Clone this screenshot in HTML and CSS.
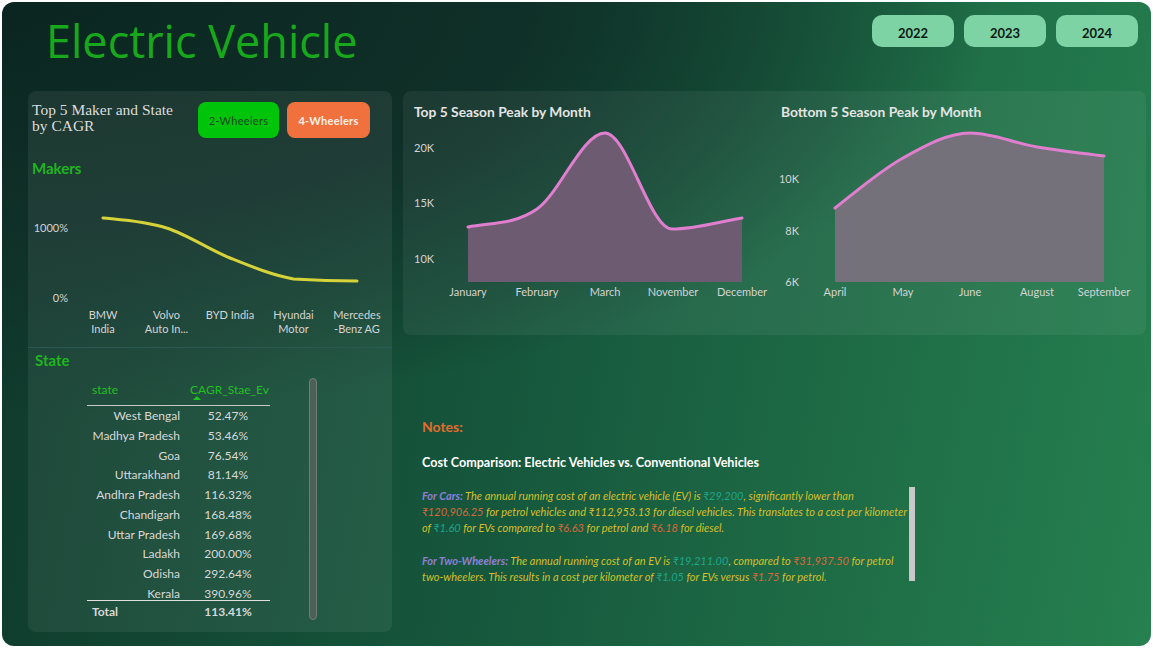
FILE: index.html
```html
<!DOCTYPE html>
<html>
<head>
<meta charset="utf-8">
<title>Electric Vehicle</title>
<link rel="stylesheet" href="styles.css">
</head>
<body>
<div class="page">
  <header class="top">
    <h1 class="title">Electric Vehicle</h1>
    <div class="years">
      <div class="year">2022</div>
      <div class="year">2023</div>
      <div class="year">2024</div>
    </div>
  </header>
  <main class="main">
    <section class="left">
      <div class="makers">
        <div class="lhead">
          <div class="ltitle">Top 5 Maker and State<br>by CAGR</div>
          <div class="toggles">
            <div class="tg tg2">2-Wheelers</div>
            <div class="tg tg4">4-Wheelers</div>
          </div>
        </div>
        <div class="sub">Makers</div>
        <svg class="mchart" viewBox="28 178 364 168" width="364" height="168">
          <g class="axis">
            <text x="68" y="232" text-anchor="end">1000%</text>
            <text x="68" y="302" text-anchor="end">0%</text>
            <text x="103" y="319" text-anchor="middle">BMW</text>
            <text x="103" y="333" text-anchor="middle">India</text>
            <text x="166.5" y="319" text-anchor="middle">Volvo</text>
            <text x="166.5" y="333" text-anchor="middle">Auto In...</text>
            <text x="230" y="319" text-anchor="middle">BYD India</text>
            <text x="293.5" y="319" text-anchor="middle">Hyundai</text>
            <text x="293.5" y="333" text-anchor="middle">Motor</text>
            <text x="357" y="319" text-anchor="middle">Mercedes</text>
            <text x="357" y="333" text-anchor="middle">-Benz AG</text>
          </g>
          <path d="M103,218 C124.2,220.1 145.3,221.3 166.5,228 C187.7,234.7 208.8,249.5 230,258 C251.2,266.5 272.3,275.2 293.5,279 C314.7,280.3 335.8,281 357,281" fill="none" stroke="#d6d23a" stroke-width="3" stroke-linecap="round"/>
        </svg>
      </div>
      <div class="states">
        <div class="sub sub-state">State</div>
        <div class="tablewrap">
          <div class="tbl">
            <div class="thead">
              <div class="th th-state">state</div>
              <div class="th th-val"><div>CAGR_Stae_Ev</div><div class="sort"></div></div>
            </div>
            <div class="tbody">
              <div class="row"><div class="st">West Bengal</div><div class="val">52.47%</div></div>
              <div class="row"><div class="st">Madhya Pradesh</div><div class="val">53.46%</div></div>
              <div class="row"><div class="st">Goa</div><div class="val">76.54%</div></div>
              <div class="row"><div class="st">Uttarakhand</div><div class="val">81.14%</div></div>
              <div class="row"><div class="st">Andhra Pradesh</div><div class="val">116.32%</div></div>
              <div class="row"><div class="st">Chandigarh</div><div class="val">168.48%</div></div>
              <div class="row"><div class="st">Uttar Pradesh</div><div class="val">169.68%</div></div>
              <div class="row"><div class="st">Ladakh</div><div class="val">200.00%</div></div>
              <div class="row"><div class="st">Odisha</div><div class="val">292.64%</div></div>
              <div class="row"><div class="st">Kerala</div><div class="val">390.96%</div></div>
            </div>
            <div class="ttotal"><div class="tt">Total</div><div class="val">113.41%</div></div>
          </div>
          <div class="vscroll"></div>
        </div>
      </div>
    </section>
    <section class="right">
      <div class="charts">
        <div class="chart">
          <div class="ctitle">Top 5 Season Peak by Month</div>
          <svg class="csvg" viewBox="403 122 372 213" width="372" height="213">
            <path d="M468,227 C491,222.4 514,224.9 537,209 C559.7,193.4 582.3,133 605,133 C627.3,133 649.7,229 672,229 C695.3,229 718.7,221.7 742,218 L742,282 L468,282 Z" fill="#6c5b71"/>
            <path d="M468,227 C491,222.4 514,224.9 537,209 C559.7,193.4 582.3,133 605,133 C627.3,133 649.7,229 672,229 C695.3,229 718.7,221.7 742,218" fill="none" stroke="#e07fcf" stroke-width="3" stroke-linecap="round"/>
            <g class="axis">
              <text x="414" y="152">20K</text>
              <text x="414" y="207">15K</text>
              <text x="414" y="263">10K</text>
              <text x="468" y="296" text-anchor="middle">January</text>
              <text x="537" y="296" text-anchor="middle">February</text>
              <text x="605" y="296" text-anchor="middle">March</text>
              <text x="673" y="296" text-anchor="middle">November</text>
              <text x="742" y="296" text-anchor="middle">December</text>
            </g>
          </svg>
        </div>
        <div class="chart chart2">
          <div class="ctitle">Bottom 5 Season Peak by Month</div>
          <svg class="csvg" viewBox="775 122 371 213" width="371" height="213">
            <path d="M835,208 C857.7,190.3 880.3,170.6 903,158 C925.3,145.6 947.7,133 970,133 C992.3,133 1014.7,143.2 1037,147 C1059.3,150.8 1081.7,153 1104,156 L1104,282 L835,282 Z" fill="#75717b"/>
            <path d="M835,208 C857.7,190.3 880.3,170.6 903,158 C925.3,145.6 947.7,133 970,133 C992.3,133 1014.7,143.2 1037,147 C1059.3,150.8 1081.7,153 1104,156" fill="none" stroke="#e07fcf" stroke-width="3" stroke-linecap="round"/>
            <g class="axis">
              <text x="799" y="183" text-anchor="end">10K</text>
              <text x="799" y="235" text-anchor="end">8K</text>
              <text x="799" y="286" text-anchor="end">6K</text>
              <text x="835" y="296" text-anchor="middle">April</text>
              <text x="903" y="296" text-anchor="middle">May</text>
              <text x="970" y="296" text-anchor="middle">June</text>
              <text x="1037" y="296" text-anchor="middle">August</text>
              <text x="1104" y="296" text-anchor="middle">September</text>
            </g>
          </svg>
        </div>
      </div>
      <div class="notes">
        <div class="nt">Notes:</div>
        <div class="nh">Cost Comparison: Electric Vehicles vs. Conventional Vehicles</div>
        <div class="nbody">
          <div class="ntext">
            <p><b class="lbl">For Cars:</b> The annual running cost of an electric vehicle (EV) is <span class="teal">₹29,200</span>, significantly lower than<br><span class="org">₹120,906.25</span> for petrol vehicles and ₹112,953.13 for diesel vehicles. This translates to a cost per kilometer<br>of <span class="teal">₹1.60</span> for EVs compared to <span class="org">₹6.63</span> for petrol and <span class="org">₹6.18</span> for diesel.</p>
            <p class="p2"><b class="lbl">For Two-Wheelers:</b> The annual running cost of an EV is <span class="teal">₹19,211.00</span>, compared to <span class="org">₹31,937.50</span> for petrol<br>two-wheelers. This results in a cost per kilometer of <span class="teal">₹1.05</span> for EVs versus <span class="org">₹1.75</span> for petrol.</p>
          </div>
          <div class="nscroll"></div>
        </div>
      </div>
    </section>
  </main>
</div>
</body>
</html>
```
FILE: styles.css
```css
html, body {
  margin: 0;
  padding: 0;
}
body {
  background: #ffffff;
  font-family: Lato, "Open Sans", sans-serif;
  color: #dcdcdc;
}
.page {
  margin: 2px;
  width: 1149px;
  height: 644px;
  border-radius: 12px;
  overflow: hidden;
  display: flex;
  flex-direction: column;
  background:
    radial-gradient(120% 90% at 0% 0%, #0b2520 0%, #0f3028 38%, rgba(15, 48, 40, 0) 72%),
    linear-gradient(100deg, #0f382b 0%, #175a3e 50%, #26804f 100%);
}
.top {
  height: 89px;
  flex: none;
  display: flex;
  justify-content: space-between;
  align-items: flex-start;
  padding: 0 13px 0 44px;
  box-sizing: border-box;
}
.title {
  margin: 14px 0 0 0;
  font-family: "Open Sans", sans-serif;
  font-weight: 400;
  font-size: 45px;
  line-height: 50px;
  color: #18a81c;
}
.years {
  display: flex;
  gap: 10px;
  margin-top: 13px;
}
.year {
  width: 82px;
  height: 32px;
  box-sizing: border-box;
  padding-top: 4px;
  border-radius: 10px;
  background: #7dd3a4;
  color: #101a14;
  font-weight: 700;
  font-size: 13px;
  display: flex;
  align-items: center;
  justify-content: center;
}
.main {
  height: 541px;
  display: flex;
  gap: 11px;
  padding: 0 5px 0 26px;
}
.left {
  width: 364px;
  flex: none;
  display: flex;
  flex-direction: column;
  border-radius: 8px;
  background: rgba(255, 255, 255, 0.065);
  overflow: hidden;
}
.makers {
  height: 256px;
  flex: none;
}
.lhead {
  display: flex;
  padding: 11px 0 0 4px;
}
.ltitle {
  width: 166px;
  font-family: "Liberation Serif", serif;
  font-size: 15.5px;
  line-height: 16px;
  color: #dcdcdc;
}
.toggles {
  display: flex;
  gap: 8px;
}
.tg {
  height: 36px;
  border-radius: 8px;
  display: flex;
  align-items: center;
  justify-content: center;
  font-size: 11px;
  letter-spacing: 0.3px;
}
.tg2 {
  width: 81px;
  background: #00c40a;
  color: #1d4a22;
}
.tg4 {
  width: 83px;
  background: #f0703e;
  color: #fff0e8;
  font-weight: 700;
}
.sub {
  margin-top: 20px;
  padding-left: 4px;
  font-size: 15px;
  font-weight: 700;
  line-height: 20px;
  color: #1fb51f;
}
.mchart {
  display: block;
}
.axis text {
  font-family: Lato, "Open Sans", sans-serif;
  font-size: 11px;
  fill: #d4d4d4;
}
.states {
  flex: 1;
  border-top: 1px solid #2b5853;
  padding-top: 2px;
}
.sub-state {
  margin-top: 0;
  padding-left: 7px;
}
.tablewrap {
  display: flex;
  margin-top: 8px;
  padding-left: 59px;
}
.tbl {
  width: 183px;
  font-size: 12px;
  color: #d8d8d8;
}
.thead {
  display: grid;
  grid-template-columns: 99px 84px;
  height: 27px;
  border-bottom: 1px solid #c8c8c8;
  color: #22c022;
}
.th-state {
  padding-left: 5px;
  line-height: 24px;
}
.th-val {
  padding-left: 4px;
  padding-top: 4px;
  line-height: 16px;
}
.sort {
  width: 0;
  height: 0;
  margin-top: -2px;
  margin-left: 3px;
  border-left: 4px solid transparent;
  border-right: 4px solid transparent;
  border-bottom: 4px solid #22c022;
}
.tbody {
  height: 194px;
  overflow: hidden;
}
.row {
  display: grid;
  grid-template-columns: 99px 84px;
  height: 19.75px;
  line-height: 20px;
}
.st {
  text-align: right;
  padding-right: 6px;
}
.val {
  text-align: center;
}
.ttotal {
  display: grid;
  grid-template-columns: 99px 84px;
  border-top: 1px solid #e0e0e0;
  height: 22px;
  line-height: 22px;
  font-weight: 700;
}
.tt {
  padding-left: 5px;
}
.vscroll {
  margin-left: 39px;
  width: 6px;
  height: 240px;
  border: 1px solid #6e7f78;
  border-radius: 4px;
  background: #4c5f58;
}
.right {
  width: 743px;
  flex: none;
  display: flex;
  flex-direction: column;
}
.charts {
  height: 244px;
  flex: none;
  display: flex;
  border-radius: 8px;
  background: rgba(255, 255, 255, 0.06);
}
.chart {
  width: 372px;
}
.chart2 {
  width: 371px;
}
.ctitle {
  padding: 11px 0 0 11px;
  font-size: 13.8px;
  font-weight: 700;
  line-height: 20px;
  color: #e4e4e4;
}
.chart2 .ctitle {
  padding-left: 6px;
}
.csvg {
  display: block;
}
.notes {
  padding: 82px 0 0 19px;
}
.nt {
  font-size: 14px;
  font-weight: 700;
  line-height: 20px;
  color: #e36c2e;
}
.nh {
  margin-top: 17px;
  font-size: 12.6px;
  font-weight: 700;
  line-height: 18px;
  color: #ffffff;
}
.nbody {
  margin-top: 15px;
  display: flex;
}
.ntext {
  width: 487px;
  font-style: italic;
  font-size: 11px;
  line-height: 16px;
  color: #d4bf2c;
  white-space: nowrap;
  padding-top: 1px;
}
.ntext p {
  margin: 0;
}
.ntext .p2 {
  margin-top: 17px;
}
.lbl {
  color: #8f7fd6;
}
.teal {
  color: #1fa58a;
}
.org {
  color: #d8683a;
}
.nscroll {
  width: 6px;
  height: 94px;
  background: #c9c9c9;
}
```
